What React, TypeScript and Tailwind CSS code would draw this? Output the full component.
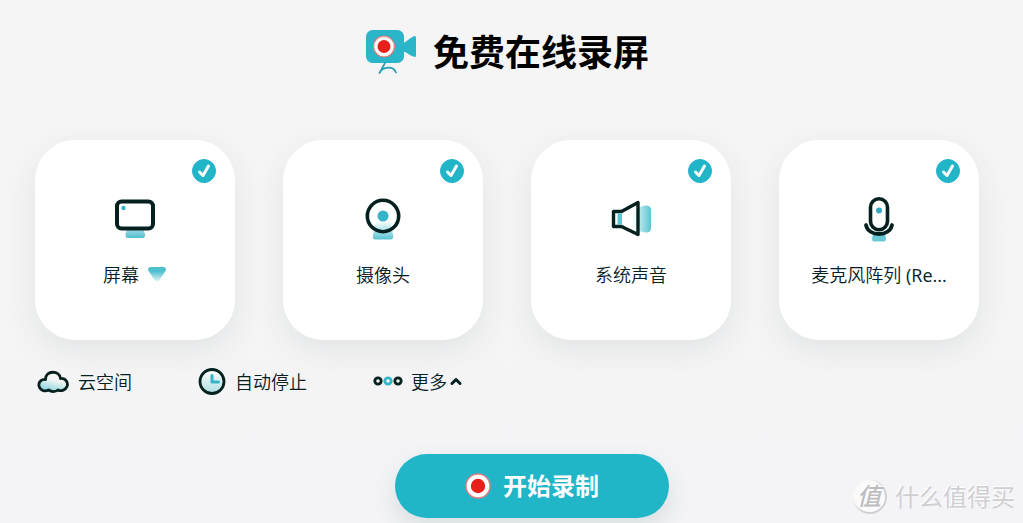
import { ReactNode } from "react";

function RecordDot({ className }: { className: string }) {
  return (
    <svg viewBox="0 0 26 26" className={className} aria-hidden="true">
      <circle cx="13" cy="13" r="12" fill="#fff" stroke="#e57f80" strokeWidth="1.4" />
      <circle cx="13" cy="13" r="7.2" fill="#e8201b" />
    </svg>
  );
}

function Logo() {
  return (
    <svg width="52" height="46" viewBox="0 0 52 46" aria-hidden="true">
      <rect x="1" y="0" width="38" height="33" rx="6.5" fill="#2bb5c8" />
      <path d="M37 14C42 12 45 7 50 6Q51 6 51 7.500V25.500Q51 27 50 27C45 26 42 22 37 21Z" fill="#2bb5c8" />
      <circle cx="19" cy="16.500" r="10.400" fill="#fff" stroke="#e57f80" strokeWidth="1.200" />
      <circle cx="19" cy="16.500" r="6.500" fill="#e8201b" />
      <path d="M20 33L14.500 43C18 36.500 28 35.500 31 42.500" fill="none" stroke="#2b9fb5" strokeWidth="1.800" strokeLinejoin="round" strokeLinecap="round" />
    </svg>
  );
}

function ScreenIcon() {
  return (
    <svg width="44" height="48" viewBox="0 0 44 48" aria-hidden="true">
      <defs>
        <linearGradient id="screenStand" x1="0" y1="0" x2="0" y2="1">
          <stop offset="0" stopColor="#a3dce5" />
          <stop offset="1" stopColor="#4dbfd0" />
        </linearGradient>
      </defs>
      <path d="M14 32H30L32 37Q32.500 41 29.500 41H15Q12 41 12.500 37Z" fill="url(#screenStand)" />
      <rect x="4" y="4.500" width="36" height="27" rx="4.500" fill="#fff" stroke="#04211f" strokeWidth="4" />
      <circle cx="10.500" cy="11" r="2.200" fill="#35b5c8" />
    </svg>
  );
}

function CameraIcon() {
  return (
    <svg width="44" height="48" viewBox="0 0 44 48" aria-hidden="true">
      <defs>
        <linearGradient id="cameraStand" x1="0" y1="0" x2="0" y2="1">
          <stop offset="0" stopColor="#fff" />
          <stop offset="1" stopColor="#5ac3d3" />
        </linearGradient>
      </defs>
      <path d="M15 24H29L32 38Q33 42.500 29.500 42.500H14.500Q11 42.500 12 38Z" fill="url(#cameraStand)" />
      <circle cx="22" cy="19" r="15.700" fill="none" stroke="#04211f" strokeWidth="3.600" />
      <circle cx="22" cy="19" r="5.500" fill="#35b5c8" />
    </svg>
  );
}

function SpeakerIcon() {
  return (
    <svg width="44" height="48" viewBox="0 0 44 48" aria-hidden="true">
      <defs>
        <linearGradient id="soundWave" x1="0" y1="0" x2="1" y2="0">
          <stop offset="0" stopColor="#fff" />
          <stop offset="1" stopColor="#5ac6d2" />
        </linearGradient>
      </defs>
      <path d="M22 18Q26 10 36 8.500Q42 8 42 13V31Q42 36 36 35.500Q26 34 22 27Z" fill="url(#soundWave)" />
      <path d="M29 5.500V37.500L12.500 29.500H4.500V14.500H12.500Z" fill="#fff" fillOpacity="0.5" stroke="#04211f" strokeWidth="3.400" strokeLinejoin="round" />
      <path d="M8.500 16.200H13V27.800H8.500Z" fill="#5fc4d4" />
    </svg>
  );
}

function MicIcon() {
  return (
    <svg width="44" height="48" viewBox="0 0 44 48" aria-hidden="true">
      <path d="M16 36H28L29 42Q29 44.500 27 44.500H17Q15 44.500 15 42Z" fill="#6bc9d6" />
      <rect x="13.500" y="1.800" width="17" height="31" rx="8.500" fill="#fff" stroke="#04211f" strokeWidth="3.600" />
      <path d="M9 28C11 40 33 40 35 28" fill="none" stroke="#04211f" strokeWidth="3.800" strokeLinecap="round" />
      <circle cx="22" cy="13.500" r="3" fill="#35a9c0" />
    </svg>
  );
}

function CloudIcon() {
  return (
    <svg width="32" height="24" viewBox="0 0 32 24" aria-hidden="true">
      <defs>
        <linearGradient id="cloudFill" x1="0.7" y1="0" x2="0.3" y2="1">
          <stop offset="0.400" stopColor="#f4f5f5" />
          <stop offset="1" stopColor="#7fd3dd" />
        </linearGradient>
      </defs>
      <path d="M8.500 9.500C8.500 0 22.500 0 23.500 8.500C29 8 31.500 13 30 16.500C28.500 20.500 23.500 21.500 21 20C18.500 22 14.500 22 11.500 20C8 22 3 20.500 2 16C1.200 11.500 5 9 8.500 9.500Z" fill="url(#cloudFill)" stroke="#04211f" strokeWidth="2.800" strokeLinejoin="round" />
    </svg>
  );
}

function ClockIcon() {
  return (
    <svg width="28" height="28" viewBox="0 0 28 28" aria-hidden="true">
      <defs>
        <linearGradient id="clockFill" x1="0" y1="0" x2="0" y2="1">
          <stop offset="0.200" stopColor="#f1f6f6" />
          <stop offset="1" stopColor="#a9e0e4" />
        </linearGradient>
      </defs>
      <circle cx="14" cy="13.500" r="12" fill="url(#clockFill)" stroke="#04211f" strokeWidth="2.800" />
      <path d="M14 7.500V14H20.500" fill="none" stroke="#35b5c8" strokeWidth="3" strokeLinecap="round" strokeLinejoin="round" />
    </svg>
  );
}

function MoreIcon() {
  return (
    <svg width="30" height="14" viewBox="0 0 30 14" fill="none" strokeWidth="2.800" aria-hidden="true">
      <circle cx="5" cy="6" r="3.200" stroke="#04211f" />
      <circle cx="15" cy="6" r="3.200" stroke="#35b5c8" />
      <circle cx="25" cy="6" r="3.200" stroke="#04211f" />
    </svg>
  );
}

interface ISourceCard {
  id: string;
  icon: ReactNode;
  label: string;
  device?: string;
  menu?: boolean;
}

const sources: ISourceCard[] = [
  { id: "screen", icon: <ScreenIcon />, label: "屏幕", menu: true },
  { id: "camera", icon: <CameraIcon />, label: "摄像头" },
  { id: "sound", icon: <SpeakerIcon />, label: "系统声音" },
  { id: "mic", icon: <MicIcon />, label: "麦克风阵列", device: "(Re..." },
];

function SourceCard({ id, icon, label, device, menu }: ISourceCard) {
  return (
    <div className="relative flex h-[200px] flex-col items-center rounded-[40px] bg-white pt-[57px] shadow-[0_10px_30px_rgba(40,70,60,0.09)]">
      <div className="absolute top-[19px] right-[19px] size-6">
        <input id={id} type="checkbox" defaultChecked className="peer block size-6 cursor-pointer appearance-none rounded-full border border-[#22b5c8] checked:bg-[#22b5c8]" />
        <svg viewBox="0 0 24 24" className="pointer-events-none absolute inset-0 hidden peer-checked:block" aria-hidden="true">
          <path d="M7.500 13L11 16.500L16.500 7" fill="none" stroke="#fff" strokeWidth="3" strokeLinecap="round" strokeLinejoin="round" />
        </svg>
      </div>
      {icon}
      <div className="mt-[18px] flex items-center gap-2 text-lg leading-6 font-[350]">
        <label htmlFor={id} className="cursor-pointer whitespace-nowrap">
          {label}
          {device && <span className="font-normal"> {device}</span>}
        </label>
        {menu && (
          <button type="button" aria-label="选择屏幕" className="cursor-pointer">
            <svg width="20" height="16" viewBox="0 0 20 16" aria-hidden="true">
              <defs>
                <linearGradient id="menuArrow" x1="0" y1="0" x2="0" y2="1">
                  <stop offset="0.300" stopColor="#4fc0d0" />
                  <stop offset="1" stopColor="#e6f6f8" />
                </linearGradient>
              </defs>
              <path d="M3 0H17Q20 1 18.500 4L12.500 13Q10 16 7.500 13L1.500 4Q0 1 3 0Z" fill="url(#menuArrow)" />
            </svg>
          </button>
        )}
      </div>
    </div>
  );
}

export default function App() {
  return (
    <main className="relative min-h-screen bg-linear-to-b from-[#f5f5f5] to-[#f4f4f6] pt-[25px] pr-11 pb-1 pl-[35px] font-['Open_Sans','Noto_Sans_CJK_SC',sans-serif] text-[#04211f]">
      <header className="flex h-[56px] items-center justify-center gap-4">
        <Logo />
        <h1 className="text-4xl font-bold text-black">免费在线录屏</h1>
      </header>

      <section className="mt-[59px] grid grid-cols-4 gap-12">
        {sources.map((source) => (
          <SourceCard key={source.id} {...source} />
        ))}
      </section>

      <nav className="mt-6 flex h-9 items-center gap-[66px] pl-0.5 text-lg leading-6 font-[350]">
        <button type="button" className="flex cursor-pointer items-center gap-[9px]">
          <CloudIcon />
          云空间
        </button>
        <button type="button" className="flex cursor-pointer items-center gap-[9px]">
          <ClockIcon />
          自动停止
        </button>
        <button type="button" className="flex cursor-pointer items-center gap-2">
          <MoreIcon />
          <span className="flex items-center gap-0.5">
            更多
            <svg width="14" height="12" viewBox="0 0 14 12" aria-hidden="true">
              <path d="M3 7.500L7 3.500L11 7.500" fill="none" stroke="#04211f" strokeWidth="3" strokeLinecap="round" strokeLinejoin="round" />
            </svg>
          </span>
        </button>
      </nav>

      <div className="mt-[54px] flex justify-center pl-[50px]">
        <button type="button" className="flex h-16 w-[274px] cursor-pointer items-center justify-center gap-3 rounded-full bg-[#21b5c8] text-2xl font-bold text-white shadow-[0_10px_24px_rgba(40,90,90,0.14)]">
          <RecordDot className="size-[26px]" />
          开始录制
        </button>
      </div>

      <div className="absolute right-2 bottom-2 flex items-center gap-2 text-2xl leading-9 text-[#cfcfd3] [text-shadow:-1px_-1px_0_#fff]">
        <span className="flex size-[34px] items-center justify-center rounded-full border-r-2 border-b-2 border-[#cfcfd3] bg-[#fafafb] font-medium text-[#bdbdc1] italic">值</span>
        什么值得买
      </div>
    </main>
  );
}
